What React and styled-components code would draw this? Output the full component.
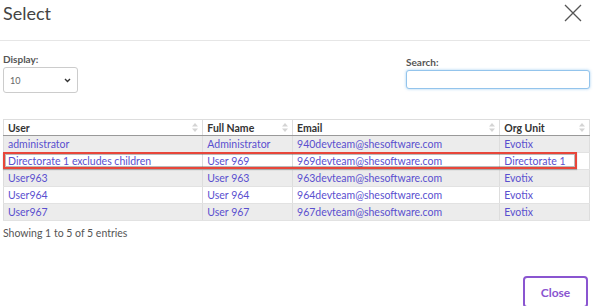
import React from "react";
import styled, { createGlobalStyle } from "styled-components";

const Global = createGlobalStyle`
  html, body {
    margin: 0;
    padding: 0;
    background: #ffffff;
    font-family: Lato, "Noto Sans", sans-serif;
  }
`;

const Modal = styled.div`
  width: 593px;
  height: 306px;
  overflow: hidden;
  display: flex;
  flex-direction: column;
`;

const Header = styled.div`
  display: flex;
  align-items: center;
  justify-content: space-between;
  height: 41px;
  padding: 0 8px 0 3px;
  margin-right: 3px;
  border-bottom: 1px solid #e6e6e6;
  box-sizing: border-box;
  > h1 {
    margin: -14px 0 0 0;
    font-size: 18px;
    font-weight: 400;
    color: #444;
  }
`;

const CloseX = styled.button`
  border: 0;
  background: none;
  padding: 0;
  margin-top: -14px;
  width: 18px;
  height: 18px;
  cursor: pointer;
`;

const Controls = styled.div`
  display: flex;
  justify-content: space-between;
  padding: 12px 3px 0 3px;
  height: 78px;
  box-sizing: border-box;
`;

const Field = styled.label`
  display: flex;
  flex-direction: column;
  margin-top: ${p => p.$top || 0}px;
  font-size: 10px;
  font-weight: 700;
  color: #555;
  > span {
    margin-bottom: 2px;
  }
`;

const SelectBox = styled.div`
  width: 75px;
  height: 26px;
  box-sizing: border-box;
  border: 1px solid #ccc;
  border-radius: 3px;
  display: flex;
  align-items: center;
  justify-content: space-between;
  padding: 0 6px 0 6px;
  font-size: 9px;
  font-weight: 400;
  color: #666;
`;

const SearchInput = styled.input`
  width: 184px;
  height: 19px;
  box-sizing: border-box;
  border: 1px solid #93c4ec;
  border-radius: 3px;
  box-shadow: 0 0 3px rgba(102, 175, 233, 0.6);
  outline: none;
`;

const TableWrap = styled.div`
  position: relative;
  margin: 0 3px;
`;

const Highlight = styled.div`
  position: absolute;
  left: 0;
  top: 33px;
  width: 574px;
  height: 17px;
  box-sizing: border-box;
  border: 2px solid #e8463a;
  box-shadow: inset 0 0 0 1px rgba(60, 60, 60, 0.35), 0 1px 1px rgba(0, 0, 0, 0.25);
  pointer-events: none;
`;

const Table = styled.table`
  width: 587px;
  border-collapse: collapse;
  font-size: 10.5px;
  border: 1px solid #ddd;
`;

const Th = styled.th`
  height: 15px;
  padding: 0 4px;
  text-align: left;
  font-weight: 700;
  color: #333;
  background: #fff;
  border-right: 1px solid #ddd;
  border-bottom: 1px solid #999;
  width: ${p => p.$w}px;
  > div {
    display: flex;
    justify-content: space-between;
    align-items: center;
  }
`;

const Row = styled.tr`
  background: ${p => (p.$odd ? "#ececec" : "#ffffff")};
`;

const Td = styled.td`
  height: 16px;
  padding: 0 4px;
  color: #5a4fcf;
  border-right: 1px solid #ddd;
  border-bottom: 1px solid #e2e2e2;
  white-space: nowrap;
`;

const Info = styled.div`
  padding: 6px 3px 0;
  font-size: 10.5px;
  color: #555;
`;

const Footer = styled.div`
  margin-top: auto;
  display: flex;
  justify-content: flex-end;
  padding: 0 5px 0 0;
`;

const CloseButton = styled.button`
  width: 65px;
  height: 32px;
  margin-bottom: -2px;
  border: 2px solid #8a55d0;
  border-radius: 4px;
  background: #fff;
  color: #8a55d0;
  font-family: Lato, "Noto Sans", sans-serif;
  font-weight: 700;
  font-size: 12px;
`;

const Sort = () => (
  <svg width="6" height="9" viewBox="0 0 6 9">
    <path d="M3 0L6 3.5H0z" fill="#d4d4d4" />
    <path d="M3 9L6 5.5H0z" fill="#d4d4d4" />
  </svg>
);

const rows = [
  ["administrator", "Administrator", "940devteam@shesoftware.com", "Evotix"],
  ["Directorate 1 excludes children", "User 969", "969devteam@shesoftware.com", "Directorate 1"],
  ["User963", "User 963", "963devteam@shesoftware.com", "Evotix"],
  ["User964", "User 964", "964devteam@shesoftware.com", "Evotix"],
  ["User967", "User 967", "967devteam@shesoftware.com", "Evotix"]
];

const cols = [
  ["User", 191],
  ["Full Name", 81],
  ["Email", 199],
  ["Org Unit", 81]
];

export default function App() {
  return (
    <Modal>
      <Global />
      <Header>
        <h1>Select</h1>
        <CloseX aria-label="close">
          <svg width="18" height="18" viewBox="0 0 18 18">
            <path d="M1 1L17 17M17 1L1 17" stroke="#555" strokeWidth="1.3" />
          </svg>
        </CloseX>
      </Header>
      <Controls>
        <Field>
          <span>Display:</span>
          <SelectBox>
            10
            <svg width="7" height="5" viewBox="0 0 7 5">
              <path d="M1 1l2.5 2.5L6 1" stroke="#333" strokeWidth="1.4" fill="none" />
            </svg>
          </SelectBox>
        </Field>
        <Field $top={3}>
          <span>Search:</span>
          <SearchInput />
        </Field>
      </Controls>
      <TableWrap>
        <Table>
          <thead>
            <tr>
              {cols.map(([c, w]) => (
                <Th key={c} $w={w}>
                  <div>
                    {c}
                    <Sort />
                  </div>
                </Th>
              ))}
            </tr>
          </thead>
          <tbody>
            {rows.map((r, i) => (
              <Row key={i} $odd={i % 2 === 0}>
                {r.map((c, j) => (
                  <Td key={j}>{c}</Td>
                ))}
              </Row>
            ))}
          </tbody>
        </Table>
        <Highlight />
      </TableWrap>
      <Info>Showing 1 to 5 of 5 entries</Info>
      <Footer>
        <CloseButton>Close</CloseButton>
      </Footer>
    </Modal>
  );
}
